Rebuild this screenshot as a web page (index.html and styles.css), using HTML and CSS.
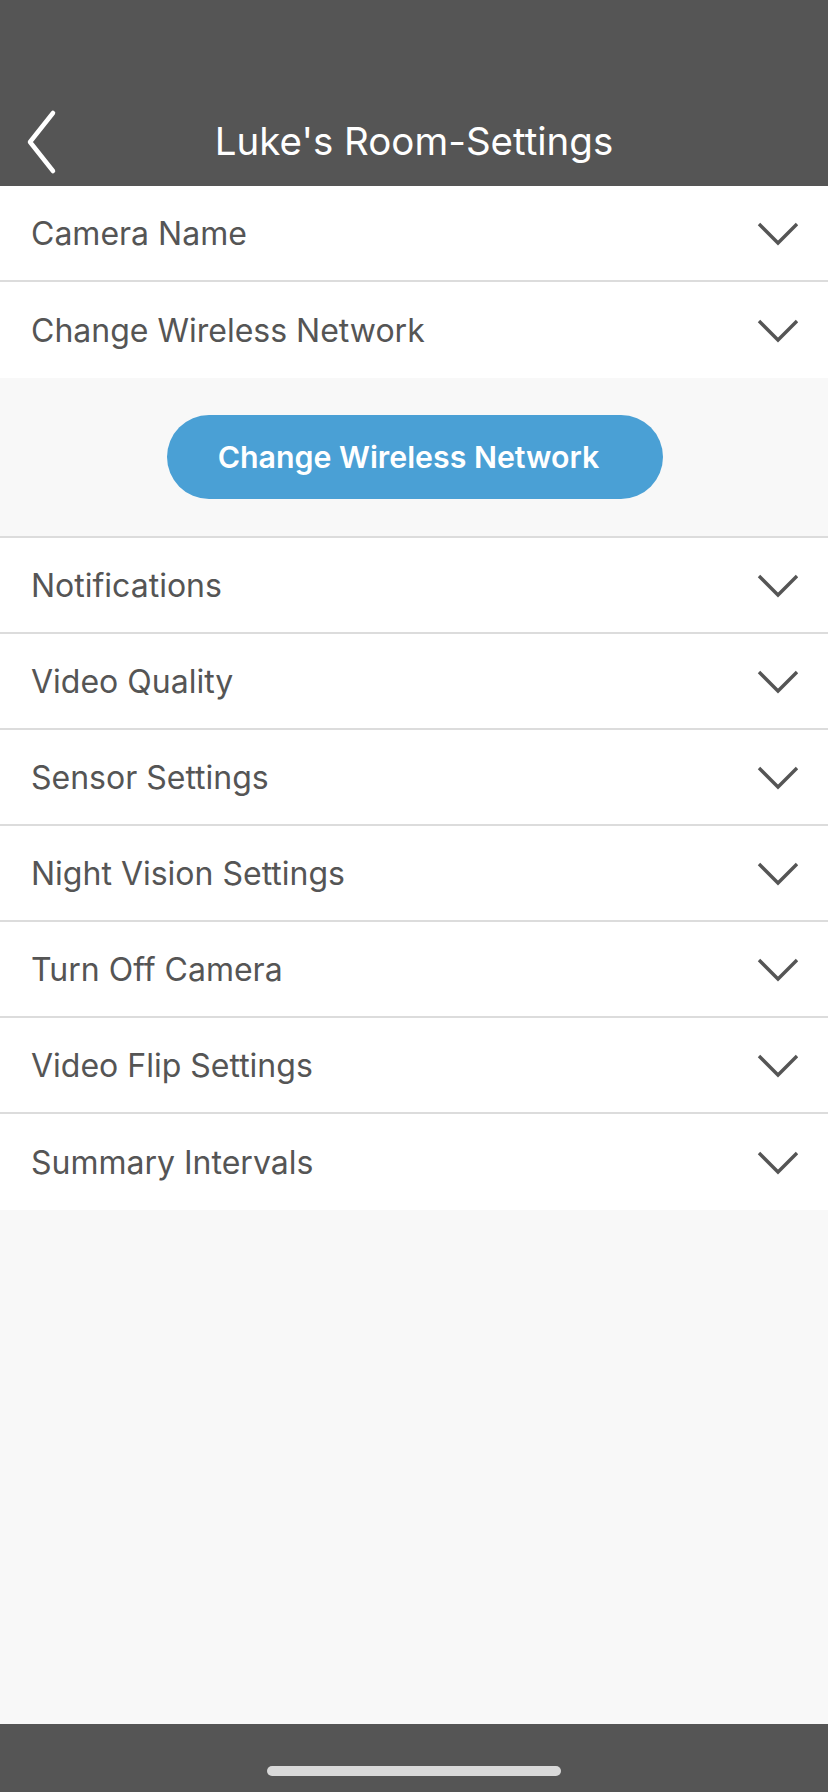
FILE: index.html
```html
<!DOCTYPE html>
<html lang="en">
<head>
<meta charset="utf-8">
<title>Luke's Room-Settings</title>
<link rel="stylesheet" href="styles.css">
</head>
<body>
<div class="screen">
  <header class="topbar">
    <div class="navrow">
      <button class="back" aria-label="Back">
        <svg width="40" height="66" viewBox="0 0 40 66"><path d="M33 4 L10 33 L33 62" fill="none" stroke="#fff" stroke-width="4.5" stroke-linecap="round" stroke-linejoin="round"/></svg>
      </button>
      <h1 class="title">Luke's Room-Settings</h1>
    </div>
  </header>

  <main class="list">
    <div class="row"><span>Camera Name</span><svg class="chev" width="42" height="24" viewBox="0 0 42 24"><path d="M2 2 L21 21 L40 2" fill="none" stroke="#555" stroke-width="3.4" stroke-linejoin="miter"/></svg></div>
    <div class="row open"><span>Change Wireless Network</span><svg class="chev" width="42" height="24" viewBox="0 0 42 24"><path d="M2 2 L21 21 L40 2" fill="none" stroke="#555" stroke-width="3.4"/></svg></div>
    <div class="panel"><button class="pill">Change Wireless Network</button></div>
    <div class="row"><span>Notifications</span><svg class="chev" width="42" height="24" viewBox="0 0 42 24"><path d="M2 2 L21 21 L40 2" fill="none" stroke="#555" stroke-width="3.4"/></svg></div>
    <div class="row"><span>Video Quality</span><svg class="chev" width="42" height="24" viewBox="0 0 42 24"><path d="M2 2 L21 21 L40 2" fill="none" stroke="#555" stroke-width="3.4"/></svg></div>
    <div class="row"><span>Sensor Settings</span><svg class="chev" width="42" height="24" viewBox="0 0 42 24"><path d="M2 2 L21 21 L40 2" fill="none" stroke="#555" stroke-width="3.4"/></svg></div>
    <div class="row"><span>Night Vision Settings</span><svg class="chev" width="42" height="24" viewBox="0 0 42 24"><path d="M2 2 L21 21 L40 2" fill="none" stroke="#555" stroke-width="3.4"/></svg></div>
    <div class="row"><span>Turn Off Camera</span><svg class="chev" width="42" height="24" viewBox="0 0 42 24"><path d="M2 2 L21 21 L40 2" fill="none" stroke="#555" stroke-width="3.4"/></svg></div>
    <div class="row"><span>Video Flip Settings</span><svg class="chev" width="42" height="24" viewBox="0 0 42 24"><path d="M2 2 L21 21 L40 2" fill="none" stroke="#555" stroke-width="3.4"/></svg></div>
    <div class="row last"><span>Summary Intervals</span><svg class="chev" width="42" height="24" viewBox="0 0 42 24"><path d="M2 2 L21 21 L40 2" fill="none" stroke="#555" stroke-width="3.4"/></svg></div>
  </main>

  <footer class="homebar"><div class="indicator"></div></footer>
</div>
</body>
</html>
```

FILE: styles.css
```css
* { box-sizing: border-box; }
html, body { margin: 0; padding: 0; }
body {
  width: 828px;
  height: 1792px;
  background: #f8f8f8;
  font-family: "Inter", "Noto Sans", "Liberation Sans", sans-serif;
  color: #555;
}
.screen {
  width: 828px;
  height: 1792px;
  display: flex;
  flex-direction: column;
}
.topbar {
  height: 186px;
  background: #555555;
  display: flex;
  align-items: flex-end;
}
.navrow {
  position: relative;
  height: 90px;
  width: 100%;
  display: flex;
  align-items: center;
  justify-content: center;
}
.back {
  position: absolute;
  left: 20px;
  top: 13px;
  width: 40px;
  height: 66px;
  padding: 0;
  border: 0;
  background: none;
  display: flex;
}
.title {
  margin: 0;
  font-weight: 400;
  font-size: 38.5px;
  color: #fff;
  letter-spacing: 0;
}
.list {
  flex: 1;
  display: flex;
  flex-direction: column;
}
.row {
  height: 96px;
  background: #fff;
  border-bottom: 2px solid #dcdcdc;
  display: flex;
  align-items: center;
  justify-content: space-between;
  padding: 0 29px 0 31px;
  font-size: 32px;
  color: #555;
}
.row.open, .row.last { border-bottom: 0; }
.chev { display: block; margin-top: 2px; }
.panel {
  height: 160px;
  background: #f8f8f8;
  border-bottom: 2px solid #dcdcdc;
  display: flex;
  align-items: center;
  justify-content: center;
}
.pill {
  width: 496px;
  height: 84px;
  padding: 0 12px 0 0;
  border: 0;
  border-radius: 42px;
  background: #4aa0d5;
  color: #fff;
  font-family: inherit;
  font-size: 30.3px;
  font-weight: 600;
  margin-left: 1px;
}
.homebar {
  height: 68px;
  background: #555555;
  display: flex;
  justify-content: center;
  align-items: flex-start;
  padding-top: 42px;
}
.indicator {
  width: 294px;
  height: 10px;
  border-radius: 5px;
  background: #d9d9d9;
}
```
